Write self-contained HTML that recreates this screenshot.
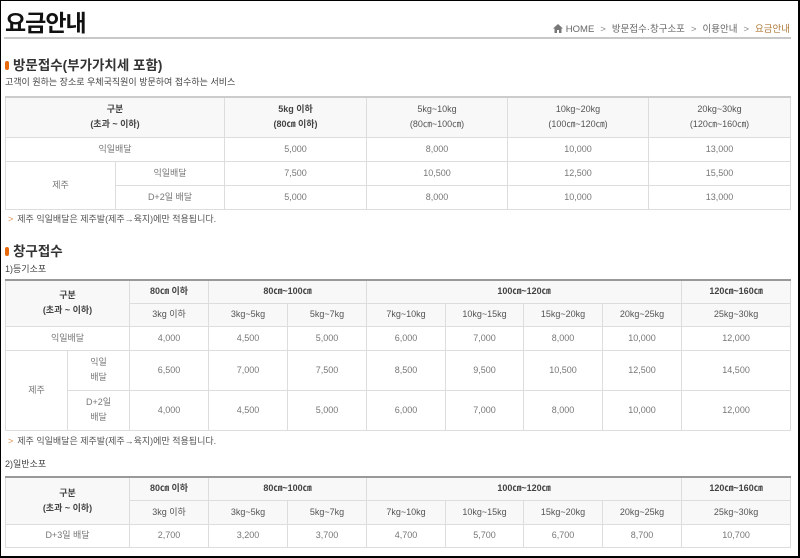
<!DOCTYPE html>
<html><head><meta charset="utf-8"><style>
*{margin:0;padding:0;box-sizing:border-box}
html,body{width:800px;height:558px;overflow:hidden;background:#fff}
body{font-family:"Liberation Sans","Noto Sans CJK KR",sans-serif;color:#555;position:relative}
.frame{position:absolute;left:0;top:0;width:800px;height:558px;border:1px solid #000;border-right:2px solid #000;border-bottom:2px solid #000;pointer-events:none}
.ab{position:absolute;white-space:nowrap}
h1{position:absolute;left:5px;top:4px;font-size:23px;font-weight:bold;color:#111;letter-spacing:-1px}
.bc{position:absolute;right:10px;top:21px;font-size:9.5px;color:#666}
.bc .cur{color:#b07a3a}
.bc .s{margin:0 6px;color:#888}
.rule{position:absolute;left:4px;right:9px;top:37px;height:2px;background:#c8c8c8}
h2{position:absolute;left:5px;font-size:13.5px;font-weight:bold;color:#333}
h2:before{content:"";display:inline-block;width:4px;height:9px;background:#e8680c;border-radius:2px;margin-right:4px;vertical-align:0px}
.t{font-size:9px;color:#444}
.note{font-size:9px;color:#555}
.note b{color:#e09050;font-weight:normal;margin-right:4px}
table{position:absolute;left:5px;border-collapse:collapse;table-layout:fixed;font-size:9px;color:#777}
table{border-top:2px solid #999}
table.t1{border-top:2px solid #ccc}
td,th{border:1px solid #ddd;text-align:center;font-weight:normal;line-height:15px}
th{background:#f8f8f8;color:#555}
th.b{font-weight:bold;color:#444}
</style></head><body>
<h1>요금안내</h1>
<div class="bc"><svg width="10" height="9" viewBox="0 0 10 9" style="vertical-align:-1px"><path d="M5 0L0 4.5h1.5V9h2.5V6h2v3h2.5V4.5H10z" fill="#777"/></svg> HOME<span class="s">&gt;</span>방문접수·창구소포<span class="s">&gt;</span>이용안내<span class="s">&gt;</span><span class="cur">요금안내</span></div>
<div class="rule"></div>
<h2 style="top:54px">방문접수(부가가치세 포함)</h2>
<div class="ab t" style="left:5px;top:75px">고객이 원하는 장소로 우체국직원이 방문하여 접수하는 서비스</div>
<table class="t1" style="top:96px;width:785px">
<colgroup><col style="width:110px"><col style="width:109px"><col style="width:142px"><col style="width:141px"><col style="width:141px"><col style="width:142px"></colgroup>
<tr style="height:40px"><th colspan="2" class="b">구분<br>(초과 ~ 이하)</th><th class="b">5kg 이하<br>(80㎝ 이하)</th><th>5kg~10kg<br>(80㎝~100㎝)</th><th>10kg~20kg<br>(100㎝~120㎝)</th><th>20kg~30kg<br>(120㎝~160㎝)</th></tr>
<tr style="height:24px"><td colspan="2">익일배달</td><td>5,000</td><td>8,000</td><td>10,000</td><td>13,000</td></tr>
<tr style="height:24px"><td rowspan="2">제주</td><td>익일배달</td><td>7,500</td><td>10,500</td><td>12,500</td><td>15,500</td></tr>
<tr style="height:24px"><td>D+2일 배달</td><td>5,000</td><td>8,000</td><td>10,000</td><td>13,000</td></tr>
</table>
<div class="ab note" style="left:8px;top:212px"><b>&gt;</b>제주 익일배달은 제주발(제주→육지)에만 적용됩니다.</div>
<h2 style="top:240px">창구접수</h2>
<div class="ab t" style="left:5px;top:262px">1)등기소포</div>
<table style="top:279px;width:785px">
<colgroup><col style="width:62px"><col style="width:62px"><col style="width:79px"><col style="width:79px"><col style="width:79px"><col style="width:79px"><col style="width:78px"><col style="width:79px"><col style="width:79px"><col style="width:109px"></colgroup>
<tr style="height:23px"><th colspan="2" rowspan="2" class="b">구분<br>(초과 ~ 이하)</th><th class="b">80㎝ 이하</th><th colspan="2" class="b">80㎝~100㎝</th><th colspan="4" class="b">100㎝~120㎝</th><th class="b">120㎝~160㎝</th></tr>
<tr style="height:23px"><th>3kg 이하</th><th>3kg~5kg</th><th>5kg~7kg</th><th>7kg~10kg</th><th>10kg~15kg</th><th>15kg~20kg</th><th>20kg~25kg</th><th>25kg~30kg</th></tr>
<tr style="height:24px"><td colspan="2">익일배달</td><td>4,000</td><td>4,500</td><td>5,000</td><td>6,000</td><td>7,000</td><td>8,000</td><td>10,000</td><td>12,000</td></tr>
<tr style="height:40px"><td rowspan="2">제주</td><td>익일<br>배달</td><td>6,500</td><td>7,000</td><td>7,500</td><td>8,500</td><td>9,500</td><td>10,500</td><td>12,500</td><td>14,500</td></tr>
<tr style="height:40px"><td>D+2일<br>배달</td><td>4,000</td><td>4,500</td><td>5,000</td><td>6,000</td><td>7,000</td><td>8,000</td><td>10,000</td><td>12,000</td></tr>
</table>
<div class="ab note" style="left:8px;top:434px"><b>&gt;</b>제주 익일배달은 제주발(제주→육지)에만 적용됩니다.</div>
<div class="ab t" style="left:5px;top:457px">2)일반소포</div>
<table style="top:476px;width:785px">
<colgroup><col style="width:124px"><col style="width:79px"><col style="width:79px"><col style="width:79px"><col style="width:79px"><col style="width:78px"><col style="width:79px"><col style="width:79px"><col style="width:109px"></colgroup>
<tr style="height:23px"><th rowspan="2" class="b">구분<br>(초과 ~ 이하)</th><th class="b">80㎝ 이하</th><th colspan="2" class="b">80㎝~100㎝</th><th colspan="4" class="b">100㎝~120㎝</th><th class="b">120㎝~160㎝</th></tr>
<tr style="height:24px"><th>3kg 이하</th><th>3kg~5kg</th><th>5kg~7kg</th><th>7kg~10kg</th><th>10kg~15kg</th><th>15kg~20kg</th><th>20kg~25kg</th><th>25kg~30kg</th></tr>
<tr style="height:23px"><td>D+3일 배달</td><td>2,700</td><td>3,200</td><td>3,700</td><td>4,700</td><td>5,700</td><td>6,700</td><td>8,700</td><td>10,700</td></tr>
</table>
<div class="frame"></div>
</body></html>
